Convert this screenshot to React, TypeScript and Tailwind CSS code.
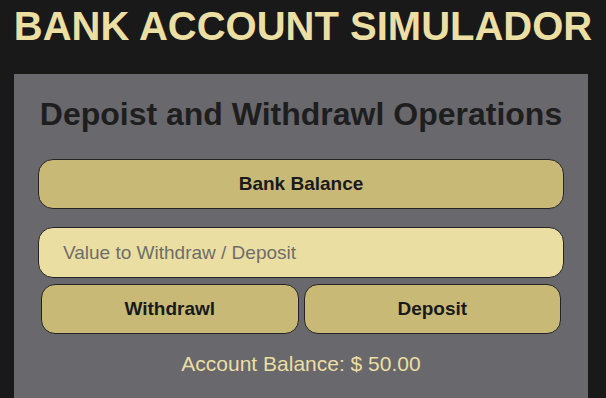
import React from "react";

const App: React.FC = () => {
  return (
    <div className="min-h-screen bg-[#191919] font-['Liberation_Sans',Arial,sans-serif]">
      <h1 className="pt-[3px] text-center text-[40px] leading-[46px] font-bold text-[#ebdfa3]">
        BANK ACCOUNT SIMULADOR
      </h1>

      <div className="ml-[14px] mr-[18px] mt-[25px] bg-[#69686d] px-[24px] pt-[22px] pb-[30px]">
        <h2 className="text-center text-[32px] leading-[37px] font-bold text-[#1e1e1e]">
          Depoist and Withdrawl Operations
        </h2>

        <button className="mt-[26px] block h-[50px] w-full rounded-[15px] border border-[#242424] bg-[#c8b977] text-[19px] font-bold text-[#1a1a1a]">
          Bank Balance
        </button>

        <input
          type="text"
          placeholder="Value to Withdraw / Deposit"
          className="mt-[18px] block h-[51px] w-full rounded-[15px] border border-[#242424] bg-[#ebdea2] px-[24px] text-[19px] text-[#1a1a1a] outline-none placeholder:text-[#6f6d69]"
        />

        <div className="mt-[6px] flex gap-[5px] px-[3px]">
          <button className="h-[50px] flex-1 rounded-[14px] border border-[#242424] bg-[#c8b977] text-[19px] font-bold text-[#1a1a1a]">
            Withdrawl
          </button>
          <button className="h-[50px] flex-1 rounded-[14px] border border-[#242424] bg-[#c8b977] text-[19px] font-bold text-[#1a1a1a]">
            Deposit
          </button>
        </div>

        <p className="mt-[18px] text-center text-[21px] leading-[23px] text-[#ebdfa3]">
          Account Balance: $ 50.00
        </p>
      </div>
    </div>
  );
};

export default App;
